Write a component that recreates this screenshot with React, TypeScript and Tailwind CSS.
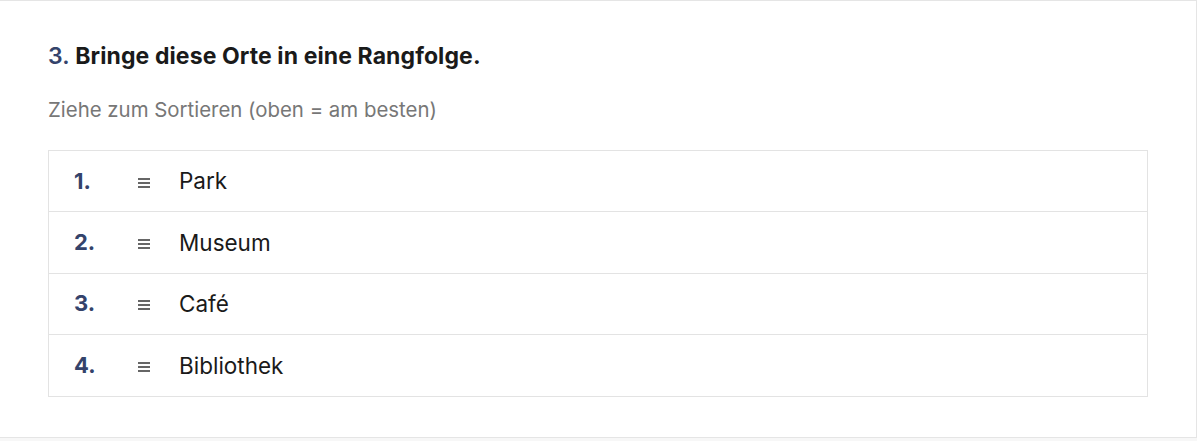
const items = ['Park', 'Museum', 'Café', 'Bibliothek'];

function DragHandle() {
  return (
    <svg width="14" height="12" viewBox="0 0 14 12" className="text-[#666]">
      <path d="M1 2h12M1 6h12M1 10h12" stroke="currentColor" strokeWidth="1.8" />
    </svg>
  );
}

export default function App() {
  return (
    <div
      className="w-[1197px] h-[441px] bg-[#f7f7f7] overflow-hidden"
      style={{ fontFamily: 'Inter, "Noto Sans", sans-serif' }}
    >
      <div className="w-[1197px] h-[438px] bg-white border-t border-r border-b border-[#e5e5e5] px-12 pt-[40px]">
        <h2 className="text-[23px] leading-[30px] font-bold text-[#1a1a1a] tracking-[0.1px]">
          <span className="text-[#34436b] font-semibold">3.</span> Bringe diese Orte in eine Rangfolge.
        </h2>
        <p className="mt-[25px] text-[20.4px] leading-[28px] text-[#777]">
          Ziehe zum Sortieren (oben = am besten)
        </p>
        <ul className="mt-[26px] border border-[#e3e3e3]">
          {items.map((item, i) => (
            <li
              key={item}
              className="h-[61.25px] flex items-center border-b border-[#e3e3e3] last:border-b-0"
            >
              <span className="w-[88px] pl-[25px] text-[22px] font-bold text-[#34436b]">{i + 1}.</span>
              <span className="w-[42px] pt-[3px] flex items-center">
                <DragHandle />
              </span>
              <span className="text-[22.5px] text-[#1a1a1a]">{item}</span>
            </li>
          ))}
        </ul>
      </div>
    </div>
  );
}
